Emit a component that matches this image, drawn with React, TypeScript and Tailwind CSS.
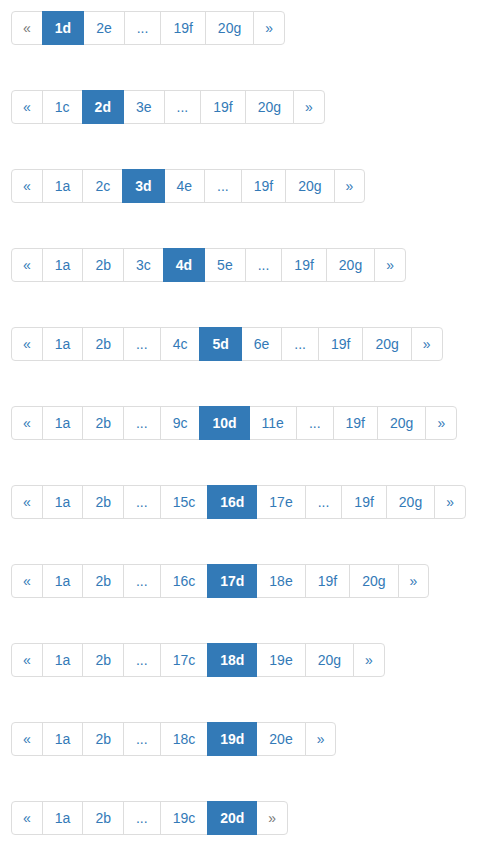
import React from 'react';

type Item = { label: string; active?: boolean; disabled?: boolean; arrow?: boolean };

const rows: string[][] = [
  ['<!', '*1d', '2e', '...', '19f', '20g', '>'],
  ['<', '1c', '*2d', '3e', '...', '19f', '20g', '>'],
  ['<', '1a', '2c', '*3d', '4e', '...', '19f', '20g', '>'],
  ['<', '1a', '2b', '3c', '*4d', '5e', '...', '19f', '20g', '>'],
  ['<', '1a', '2b', '...', '4c', '*5d', '6e', '...', '19f', '20g', '>'],
  ['<', '1a', '2b', '...', '9c', '*10d', '11e', '...', '19f', '20g', '>'],
  ['<', '1a', '2b', '...', '15c', '*16d', '17e', '...', '19f', '20g', '>'],
  ['<', '1a', '2b', '...', '16c', '*17d', '18e', '19f', '20g', '>'],
  ['<', '1a', '2b', '...', '17c', '*18d', '19e', '20g', '>'],
  ['<', '1a', '2b', '...', '18c', '*19d', '20e', '>'],
  ['<', '1a', '2b', '...', '19c', '*20d', '>!'],
];

function parse(token: string): Item {
  const disabled = token.endsWith('!');
  const raw = disabled ? token.slice(0, -1) : token;
  if (raw === '<') return { label: '«', disabled, arrow: true };
  if (raw === '>') return { label: '»', disabled, arrow: true };
  if (raw.startsWith('*')) return { label: raw.slice(1), active: true };
  return { label: raw };
}

function Pagination({ tokens }: { tokens: string[] }) {
  const items = tokens.map(parse);
  return (
    <ul className="flex">
      {items.map((item, i) => {
        const first = i === 0;
        const last = i === items.length - 1;
        return (
          <li key={i} className={first ? '' : '-ml-px'}>
            <span
              className={`relative block border py-1.5 text-sm leading-5 ${
                item.arrow ? 'px-[11px]' : 'px-3'
              } ${first ? 'rounded-l' : ''} ${last ? 'rounded-r' : ''} ${
                item.active
                  ? 'z-10 border-[#337ab7] bg-[#337ab7] font-bold text-white'
                  : item.disabled
                    ? 'border-[#ddd] bg-white text-[#777]'
                    : 'border-[#ddd] bg-white text-[#337ab7]'
              }`}
            >
              {item.label}
            </span>
          </li>
        );
      })}
    </ul>
  );
}

export default function App() {
  return (
    <div
      className="flex min-h-[853px] flex-col gap-[45px] bg-white pl-[11px] pt-[11px]"
      style={{ fontFamily: '"Liberation Sans", Arial, sans-serif' }}
    >
      {rows.map((r, i) => (
        <Pagination key={i} tokens={r} />
      ))}
    </div>
  );
}
